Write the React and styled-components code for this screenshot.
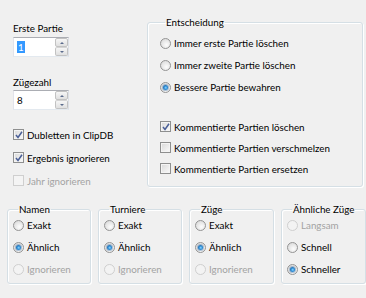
import React from 'react'
import styled, { createGlobalStyle } from 'styled-components'

const GlobalStyle = createGlobalStyle`
  html, body {
    margin: 0;
    padding: 0;
    background: #f0f0f0;
  }
  body {
    font-family: Lato, "Open Sans", "Liberation Sans", sans-serif;
    font-size: 9.8px;
    color: #000;
  }
`

const Dialog = styled.div`
  width: 366px;
  height: 298px;
  box-sizing: border-box;
  display: flex;
  flex-direction: column;
`

const TopRow = styled.div`
  display: flex;
  height: 194px;
`

const LeftColumn = styled.div`
  width: 147px;
  box-sizing: border-box;
  padding: 21px 0 0 13px;
  display: flex;
  flex-direction: column;
`

const Label = styled.div`
  line-height: 15px;
  height: 15px;
  margin-top: ${(p) => p.$gap || 0}px;
  margin-bottom: ${(p) => p.$after || 0}px;
`

const Spin = styled.div`
  display: flex;
  width: 56px;
  height: 20px;
  box-sizing: border-box;
  background: #fff;
  border: 1px solid #e3e9ef;
  border-top-color: #abadb3;
  border-left-color: #e2e3ea;
  border-right-color: #dbdfe6;
`

const SpinValue = styled.div`
  flex: 1;
  padding: 2px 0 0 3px;
  line-height: 14px;
`

const Selected = styled.span`
  background: #3399ff;
  color: #fff;
  padding: 0 1px;
`

const SpinButtons = styled.div`
  width: 13px;
  display: flex;
  flex-direction: column;
`

const SpinButton = styled.div`
  flex: 1;
  display: flex;
  align-items: center;
  justify-content: center;
  border: 1px solid #c2c2c2;
  border-radius: 2px;
  background: linear-gradient(#f6f6f6, #e0e0e0);
  & + & {
    border-top-color: #d4d4d4;
  }
`

const Arrow = styled.span`
  width: 0;
  height: 0;
  border-left: 2.5px solid transparent;
  border-right: 2.5px solid transparent;
  ${(p) =>
    p.$down
      ? 'border-top: 2.5px solid #5a6b8c;'
      : 'border-bottom: 2.5px solid #5a6b8c;'}
`

const Option = styled.label`
  display: flex;
  align-items: center;
  gap: 3px;
  height: ${(p) => p.$h || 22}px;
  color: ${(p) => (p.$disabled ? '#a3a3a3' : '#000')};
  white-space: nowrap;
`

const RadioMark = styled.span`
  width: 11px;
  height: 11px;
  box-sizing: border-box;
  border-radius: 50%;
  border: 1px solid ${(p) => (p.$disabled ? '#cfcfcf' : '#949494')};
  background: ${(p) =>
    p.$disabled
      ? '#f3f3f3'
      : 'radial-gradient(circle at 60% 65%, #fdfdfd 0%, #e6e6e6 55%, #d2d2d2 100%)'};
  display: flex;
  align-items: center;
  justify-content: center;
  flex-shrink: 0;
  &::after {
    content: '';
    display: ${(p) => (p.$checked ? 'block' : 'none')};
    width: 5px;
    height: 5px;
    border-radius: 50%;
    background: radial-gradient(circle at 55% 55%, #8fd7ff 0%, #2a8ad4 45%, #17457c 100%);
    box-shadow: 0 0 0 1px rgba(30, 90, 150, 0.35);
  }
`

const CheckMark = styled.span`
  width: 11px;
  height: 11px;
  box-sizing: border-box;
  border: 1px solid ${(p) => (p.$disabled ? '#cfcfcf' : '#8e8f8f')};
  background: ${(p) =>
    p.$disabled ? '#f4f4f4' : 'linear-gradient(135deg, #d8d8d8, #fbfbfb)'};
  box-shadow: inset 0 0 0 1px #f4f4f4;
  flex-shrink: 0;
  display: flex;
  align-items: center;
  justify-content: center;
`

const Radio = ({ checked, disabled, children }) => (
  <Option $disabled={disabled}>
    <RadioMark $checked={checked} $disabled={disabled} />
    {children}
  </Option>
)

const Check = ({ checked, disabled, h, children }) => (
  <Option $disabled={disabled} $h={h}>
    <CheckMark $disabled={disabled}>
      {checked && (
        <svg width="8" height="8" viewBox="0 0 8 8">
          <path d="M1 4 L3 6.5 L7 0.8" fill="none" stroke="#4a5f97" strokeWidth="1.5" />
        </svg>
      )}
    </CheckMark>
    {children}
  </Option>
)

const Group = styled.fieldset`
  margin: ${(p) => p.$top || 0}px 0 0 0;
  box-sizing: border-box;
  width: ${(p) => p.$w}px;
  height: ${(p) => p.$h}px;
  padding: ${(p) => p.$pad};
  border: 1px solid #d5dfe5;
  border-radius: 3px;
  box-shadow: inset 1px 1px 0 #fff, 1px 1px 0 #fff;
  display: flex;
  flex-direction: column;
`

const Legend = styled.legend`
  padding: 0 1px;
  margin-left: 5px;
  line-height: 13px;
  white-space: nowrap;
`

const Options = styled.div`
  display: flex;
  flex-direction: column;
  margin-top: ${(p) => p.$shift || 0}px;
`

const Spacer = styled.div`
  height: ${(p) => p.$h}px;
`

const BottomRow = styled.div`
  display: flex;
  gap: 7px;
  padding-left: 7px;
`

const SpinBox = ({ value, selected }) => (
  <Spin>
    <SpinValue>{selected ? <Selected>{value}</Selected> : value}</SpinValue>
    <SpinButtons>
      <SpinButton>
        <Arrow />
      </SpinButton>
      <SpinButton>
        <Arrow $down />
      </SpinButton>
    </SpinButtons>
  </Spin>
)

const SmallGroup = ({ title, w, children }) => (
  <Group $w={w} $h={81} $top={9} $pad="0 0 0 5px">
    <Legend>{title}</Legend>
    <Options $shift={-2}>{children}</Options>
  </Group>
)

const App = () => (
  <Dialog>
    <GlobalStyle />
    <TopRow>
      <LeftColumn>
        <Label $after={1}>Erste Partie</Label>
        <SpinBox value="1" selected />
        <Label $gap={18}>Zügezahl</Label>
        <SpinBox value="8" />
        <Spacer $h={13} />
        <Check checked h={23}>Dubletten in ClipDB</Check>
        <Check checked h={23}>Ergebnis ignorieren</Check>
        <Check disabled h={23}>Jahr ignorieren</Check>
      </LeftColumn>
      <Group $w={216} $h={171} $top={16} $pad="3px 0 0 12px">
        <Legend>Entscheidung</Legend>
        <Radio>Immer erste Partie löschen</Radio>
        <Radio>Immer zweite Partie löschen</Radio>
        <Radio checked>Bessere Partie bewahren</Radio>
        <Spacer $h={18} />
        <Check checked h={21}>Kommentierte Partien löschen</Check>
        <Check h={21}>Kommentierte Partien verschmelzen</Check>
        <Check h={21}>Kommentierte Partien ersetzen</Check>
      </Group>
    </TopRow>
    <BottomRow>
      <SmallGroup title="Namen" w={84}>
        <Radio>Exakt</Radio>
        <Radio checked>Ähnlich</Radio>
        <Radio disabled>Ignorieren</Radio>
      </SmallGroup>
      <SmallGroup title="Turniere" w={84}>
        <Radio>Exakt</Radio>
        <Radio checked>Ähnlich</Radio>
        <Radio disabled>Ignorieren</Radio>
      </SmallGroup>
      <SmallGroup title="Züge" w={85}>
        <Radio>Exakt</Radio>
        <Radio checked>Ähnlich</Radio>
        <Radio disabled>Ignorieren</Radio>
      </SmallGroup>
      <SmallGroup title="Ähnliche Züge" w={85}>
        <Radio disabled>Langsam</Radio>
        <Radio>Schnell</Radio>
        <Radio checked>Schneller</Radio>
      </SmallGroup>
    </BottomRow>
  </Dialog>
)

export default App
